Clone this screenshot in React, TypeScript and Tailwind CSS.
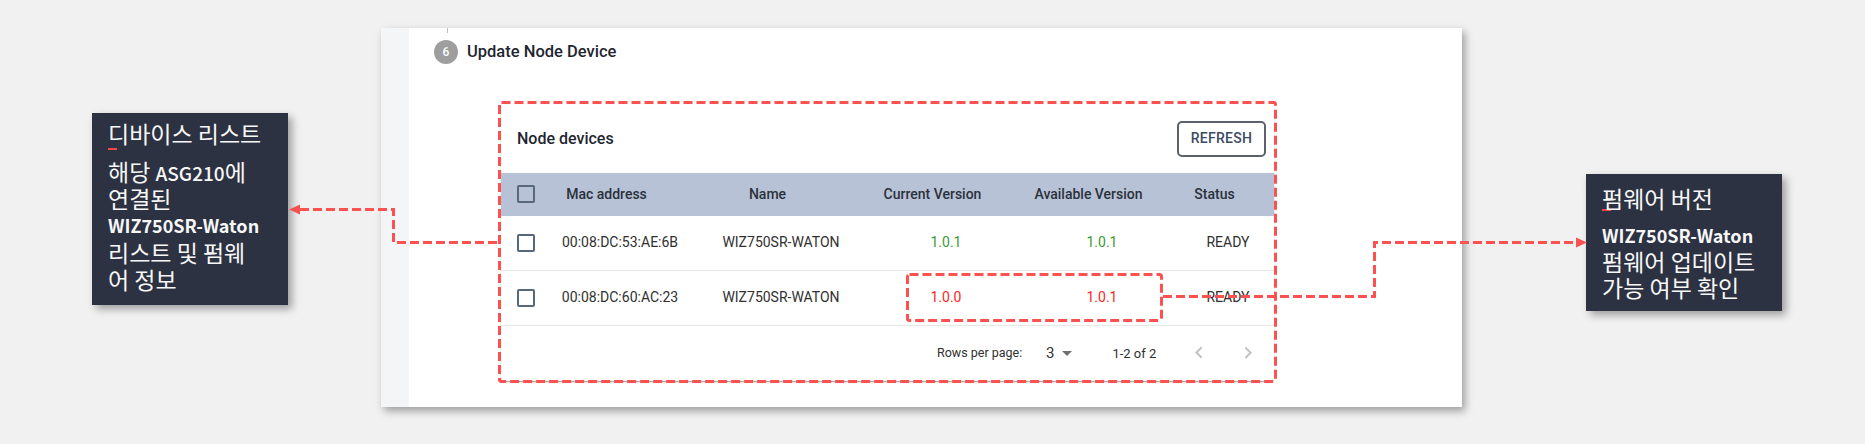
import React from "react";

const RED = "#fb5151";

function Checkbox() {
  return <div className="h-[18px] w-[18px] rounded-[2px] border-2 border-[#56687a]" />;
}

const cols = "grid grid-cols-[47px_144px_178px_152px_160px_92px] items-center";

function Row({ mac, cur, avail, ok }: { mac: string; cur: string; avail: string; ok: boolean }) {
  const c = ok ? "text-[#3a9a35]" : "text-[#ff2424]";
  return (
    <div className={`${cols} h-[55px] border-b border-[#e6e6e6] text-[14px] text-[#303030]`}>
      <div className="pl-[16px]">
        <Checkbox />
      </div>
      <div className="text-center">{mac}</div>
      <div className="text-center">WIZ750SR-WATON</div>
      <div className={`text-center ${c}`}>{cur}</div>
      <div className={`text-center ${c}`}>{avail}</div>
      <div className="text-center">READY</div>
    </div>
  );
}

function Table() {
  return (
    <div className="w-[773px] rounded-[4px] bg-white shadow-[0_2px_1px_-1px_rgba(0,0,0,0.2),0_1px_1px_0_rgba(0,0,0,0.14),0_1px_3px_0_rgba(0,0,0,0.12)]">
      <div className="flex h-[68px] items-center justify-between pl-[16px] pr-[8px]">
        <div className="text-[16px] font-medium text-[#1f2630]">Node devices</div>
        <div className="flex h-[36px] w-[89px] items-center justify-center rounded-[5px] border-2 border-[#5c626c] text-[14px] font-medium tracking-[0.3px] text-[#3c4a62]">
          REFRESH
        </div>
      </div>
      <div className={`${cols} h-[43px] bg-[#b8c2d6] text-[14px] font-medium text-[#2a313c]`}>
        <div className="pl-[16px]">
          <Checkbox />
        </div>
        <div className="pr-[27px] text-center">Mac address</div>
        <div className="pr-[27px] text-center">Name</div>
        <div className="pr-[27px] text-center">Current Version</div>
        <div className="pr-[27px] text-center">Available Version</div>
        <div className="pr-[27px] text-center">Status</div>
      </div>
      <Row mac="00:08:DC:53:AE:6B" cur="1.0.1" avail="1.0.1" ok />
      <Row mac="00:08:DC:60:AC:23" cur="1.0.0" avail="1.0.1" ok={false} />
      <div className="flex h-[55px] items-center pl-[436px] text-[#303030]">
        <span className="w-[85px] whitespace-nowrap text-[12.5px]">Rows per page:</span>
        <span className="ml-[24px] text-[15px]">3</span>
        <svg className="ml-[8px]" width="10" height="5" viewBox="0 0 10 5">
          <path d="M0 0l5 5 5-5z" fill="#707070" />
        </svg>
        <span className="ml-[40px] w-[44px] whitespace-nowrap text-[13px]">1-2 of 2</span>
        <svg className="ml-[31px]" width="24" height="24" viewBox="0 0 24 24">
          <path d="M15.41 16.09l-4.58-4.59 4.58-4.59L14 5.5l-6 6 6 6z" fill="#c2c2c2" />
        </svg>
        <svg className="ml-[25px]" width="24" height="24" viewBox="0 0 24 24">
          <path d="M8.59 16.34l4.58-4.59-4.58-4.59L10 5.75l6 6-6 6z" fill="#c2c2c2" />
        </svg>
      </div>
    </div>
  );
}

function Underline() {
  return <div className="h-[2px] w-[9px] bg-[#f04848]" />;
}

export default function App() {
  const ko = "font-['Noto_Sans_CJK_KR',sans-serif]";
  return (
    <div className="relative h-[444px] w-[1865px] overflow-hidden bg-[#f1f1f1] font-['Roboto',sans-serif]">
      <div className="flex items-start">
        {/* left callout */}
        <div className={`${ko} ml-[92px] mt-[113px] h-[192px] w-[196px] shrink-0 bg-[#2c3242] pl-[16px] pt-[7px] text-[23px] text-[#f7f7f7] shadow-[4px_4px_8px_rgba(0,0,0,0.35)]`}>
          <div className="h-[27px] whitespace-nowrap leading-[27px]">디바이스 리스트</div>
          <div className="mt-[1px]">
            <Underline />
          </div>
          <div className="mt-[8px] h-[27px] whitespace-nowrap leading-[27px]">
            해당 <span className="text-[19px] font-medium">ASG210</span>에
          </div>
          <div className="h-[27px] whitespace-nowrap leading-[27px]">연결된</div>
          <div className="h-[27px] whitespace-nowrap text-[18px] font-semibold leading-[27px]">WIZ750SR-Waton</div>
          <div className="h-[27px] whitespace-nowrap leading-[27px]">리스트 및 펌웨</div>
          <div className="h-[27px] whitespace-nowrap leading-[27px]">어 정보</div>
        </div>

        {/* main card */}
        <div className="ml-[93px] mt-[28px] flex h-[379px] w-[1081px] shrink-0 bg-white shadow-[3px_4px_8px_rgba(0,0,0,0.35)]">
          <div className="w-[28px] shrink-0 bg-[#f4f5f7]" />
          <div className="flex-1">
            <div className="ml-[38px] h-[5px] w-px bg-[#bdbdbd]" />
            <div className="ml-[25px] mt-[7px] flex items-center">
              <div className="flex h-[24px] w-[24px] items-center justify-center rounded-full bg-[#9e9e9e] text-[12px] font-medium text-white">
                6
              </div>
              <div className="ml-[9px] text-[16.5px] font-medium text-[#1f2630]">Update Node Device</div>
            </div>
            <div className="ml-[92px] mt-[40px]">
              <Table />
            </div>
          </div>
        </div>

        {/* right callout */}
        <div className={`${ko} ml-[124px] mt-[174px] h-[137px] w-[196px] shrink-0 bg-[#2c3242] pl-[16px] pt-[11px] text-[23px] text-[#f7f7f7] shadow-[4px_4px_8px_rgba(0,0,0,0.35)]`}>
          <div className="h-[27px] whitespace-nowrap leading-[27px]">펌웨어 버전</div>
          <div className="-mt-[3px]">
            <Underline />
          </div>
          <div className="mt-[11px] h-[26px] whitespace-nowrap text-[18px] font-semibold leading-[26px]">WIZ750SR-Waton</div>
          <div className="h-[26px] whitespace-nowrap leading-[26px]">펌웨어 업데이트</div>
          <div className="h-[26px] whitespace-nowrap leading-[26px]">가능 여부 확인</div>
        </div>
      </div>

      {/* annotation overlay */}
      <svg className="pointer-events-none absolute inset-0" width="1865" height="444" viewBox="0 0 1865 444">
        <g fill="none" stroke={RED} strokeWidth="3" strokeDasharray="9 4">
          <rect x="499.5" y="102.5" width="776" height="279" rx="2" />
          <rect x="907.5" y="274.5" width="254" height="46" rx="2" />
          <polyline points="497,242.5 393.5,242.5 393.5,209.5 300,209.5" />
          <polyline points="1163,296.5 1374.5,296.5 1374.5,242.5 1576,242.5" />
        </g>
        <polygon points="289,209.5 300,204.5 300,214.5" fill={RED} />
        <polygon points="1587,242.5 1576,237.5 1576,247.5" fill={RED} />
      </svg>
    </div>
  );
}
